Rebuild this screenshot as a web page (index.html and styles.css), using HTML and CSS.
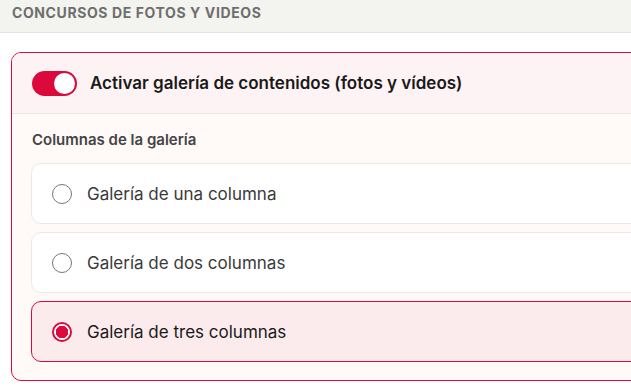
FILE: index.html
```html
<!DOCTYPE html>
<html lang="es">
<head>
  <meta charset="UTF-8" />
  <meta name="viewport" content="width=device-width, initial-scale=1" />
  <title>Concursos de fotos y videos</title>
  <link rel="stylesheet" href="styles.css">
</head>
<body>
  <div class="section-title">Concursos de fotos y videos</div>

  <div class="page">
    <div class="card">
      <div class="card-head">
        <span class="toggle on"><span class="knob"></span></span>
        <span class="head-label">Activar galería de contenidos (fotos y vídeos)</span>
      </div>

      <div class="card-body">
        <div class="field-label">Columnas de la galería</div>

        <div class="options">
          <label class="option">
            <span class="radio"></span>
            <span class="option-text">Galería de una columna</span>
          </label>
          <label class="option">
            <span class="radio"></span>
            <span class="option-text">Galería de dos columnas</span>
          </label>
          <label class="option selected">
            <span class="radio"></span>
            <span class="option-text">Galería de tres columnas</span>
          </label>
        </div>
      </div>
    </div>
  </div>
</body>
</html>
```

FILE: styles.css
```css
body {
  margin: 0;
  font-family: Inter, "Noto Sans", sans-serif;
  background-color: #fff;
  overflow: hidden;
  width: 631px;
  height: 392px;
}
.section-title {
  height: 33px;
  box-sizing: border-box;
  padding: 4px 12px 0;
  background-color: #f3f3ef;
  border-bottom: 1px solid #e4e4df;
  font-size: 14px;
  font-weight: 700;
  letter-spacing: 0.6px;
  text-transform: uppercase;
  color: #6e6e6e;
  line-height: 18px;
}
.page {
  padding: 19px 0 0 11px;
}
.card {
  width: 680px;
  border: 1px solid #dc0a3c;
  border-radius: 10px;
  background-color: #fffaf8;
  overflow: hidden;
}
.card-head {
  display: flex;
  align-items: center;
  gap: 13px;
  height: 60px;
  padding: 0 20px;
  background-color: #fdf3f4;
  border-bottom: 1px solid #ebe6e4;
}
.toggle {
  position: relative;
  width: 45px;
  height: 25px;
  border-radius: 13px;
  background-color: #dc0a3c;
  flex-shrink: 0;
}
.toggle .knob {
  position: absolute;
  top: 2px;
  right: 2px;
  width: 21px;
  height: 21px;
  border-radius: 50%;
  background: #fff;
}
.head-label {
  font-size: 17px;
  font-weight: 600;
  color: #1a1a1a;
}
.card-body {
  padding: 17px 0 18px 19px;
}
.field-label {
  font-size: 15px;
  line-height: 18px;
  font-weight: 600;
  color: #444;
  margin-left: 1px;
  margin-bottom: 14px;
}
.options {
  display: flex;
  flex-direction: column;
  gap: 8px;
}
.option {
  display: flex;
  align-items: center;
  gap: 15px;
  height: 61px;
  box-sizing: border-box;
  padding: 0 20px;
  background-color: #fff;
  border: 1px solid #ece8e6;
  border-radius: 10px;
}
.option.selected {
  background-color: #fcebed;
  border-color: #dc0a3c;
}
.radio {
  width: 20px;
  height: 20px;
  box-sizing: border-box;
  border: 1.5px solid #767676;
  border-radius: 50%;
  flex-shrink: 0;
}
.option.selected .radio {
  border: 2px solid #dc0a3c;
  background: radial-gradient(circle, #dc0a3c 0 6px, #fff 6.5px);
}
.option-text {
  font-size: 17px;
  color: #3a3a3a;
}
.option.selected .option-text {
  color: #1a1a1a;
}
```
